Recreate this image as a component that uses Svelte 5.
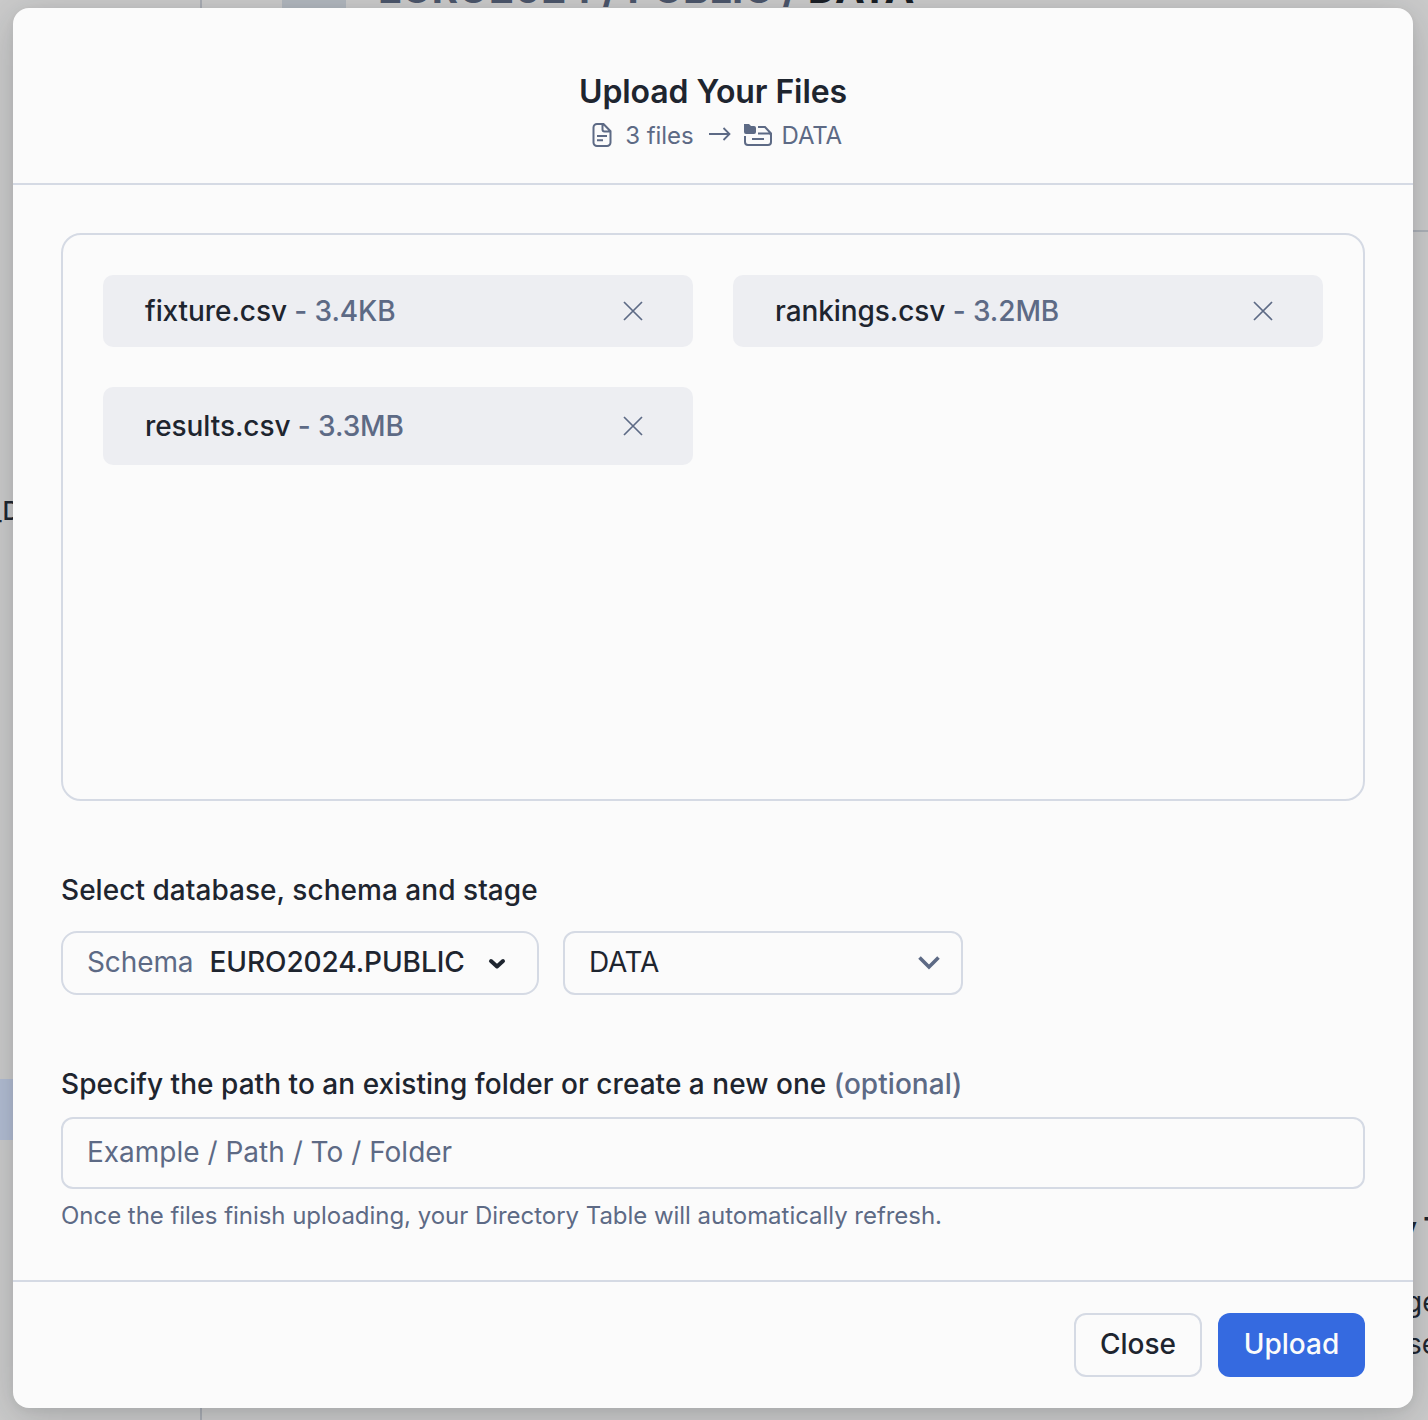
<script>
  const files = [
    { name: 'fixture.csv', size: '3.4KB' },
    { name: 'rankings.csv', size: '3.2MB' },
    { name: 'results.csv', size: '3.3MB' }
  ];
</script>

<div class="page">
  <!-- Page content that shows around the edges of the dialog -->
  <div class="backdrop" aria-hidden="true">
    <div class="rail"></div>
    <div class="tile"></div>
    <div class="crumbs"><span>EURO2024 / PUBLIC /</span> DATA</div>
    <div class="rule"></div>
    <div class="tree-item">_D</div>
    <div class="tree-active"></div>
    <div class="note heading">y T</div>
    <div class="note line-a">ge</div>
    <div class="note line-b">se</div>
  </div>

  <div class="dialog" role="dialog" aria-label="Upload Your Files">
    <header>
      <h1>Upload Your Files</h1>
      <div class="summary">
        <svg class="doc" width="20" height="26" viewBox="0 0 20 26" fill="none" stroke="currentColor" stroke-width="2">
          <path d="M11 2H5a3.500 3.500 0 0 0-3.500 3.500v15A3.500 3.500 0 0 0 5 24h10a3.500 3.500 0 0 0 3.500-3.500V9.200L11.500 2H10.500V7.500a2 2 0 0 0 2 2H18" />
          <path d="M5 14h10M5 18.200h6" />
        </svg>
        <span class="count">3 files</span>
        <svg class="arrow" width="22" height="14" viewBox="0 0 22 14" fill="none" stroke="currentColor" stroke-width="1.800">
          <path d="M0 7h20.500M14.500 1l6 6-6 6" />
        </svg>
        <svg class="folder" width="28" height="22" viewBox="0 0 28 22" fill="none" stroke="currentColor" stroke-width="2">
          <path d="M0 0h5l2 2h3a2 2 0 0 1 2 2v4a2 2 0 0 1-2 2H2a2 2 0 0 1-2-2z" fill="currentColor" stroke="none" />
          <path d="M1 12v6a3 3 0 0 0 3 3h20a3 3 0 0 0 3-3v-6.500a2 2 0 0 0-2-2H14M14 3h7l6 6.500v2" />
          <path d="M8 15h12" />
        </svg>
        <span class="target">DATA</span>
      </div>
    </header>

    <main>
      <div class="dropzone">
        {#each files as file}
          <div class="file">
            <span class="name">{file.name} <span class="muted">- {file.size}</span></span>
            <svg width="20" height="20" viewBox="0 0 20 20" fill="none" stroke="currentColor" stroke-width="1.700">
              <path d="M1 1l18 18M19 1L1 19" />
            </svg>
          </div>
        {/each}
      </div>

      <div class="label stage">Select database, schema and stage</div>
      <div class="selects">
        <div class="schema">
          <span class="key">Schema</span>
          <span class="value">EURO2024.PUBLIC</span>
          <svg width="18" height="12" viewBox="0 0 18 12" fill="none" stroke="currentColor" stroke-width="4" stroke-linecap="round" stroke-linejoin="round">
            <path d="M3 3l6 5.500L15 3" />
          </svg>
        </div>
        <div class="picker">
          <span>DATA</span>
          <svg width="22" height="14" viewBox="0 0 22 14" fill="none" stroke="currentColor" stroke-width="3.600">
            <path d="M1.500 1.500L11 11l9.500-9.500" />
          </svg>
        </div>
      </div>

      <div class="label path">Specify the path to an existing folder or create a new one <span class="muted">(optional)</span></div>
      <div class="input">Example / Path / To / Folder</div>
      <div class="help">Once the files finish uploading, your Directory Table will automatically refresh.</div>
    </main>

    <footer>
      <button class="close">Close</button>
      <button class="upload">Upload</button>
    </footer>
  </div>
</div>

<style>
  .page {
    position: relative;
    box-sizing: border-box;
    width: 1428px;
    height: 1420px;
    padding: 8px 15px 12px 13px;
    overflow: hidden;
    background: #cbcbcb;
    color: #1e252f;
    font-family: Inter, 'Liberation Sans', sans-serif;
    white-space: nowrap;
  }
  .page * { box-sizing: border-box; }

  .backdrop > div { position: absolute; }
  .rail { left: 200px; top: 0; width: 2px; height: 1420px; background: #a9adb4; }
  .tile { left: 282px; top: 0; width: 64px; height: 20px; background: #b1b7be; }
  .crumbs { left: 378px; top: -35px; font-size: 40px; line-height: 48px; font-weight: 700; letter-spacing: 0.06px; color: #191e25; }
  .crumbs span { color: #4b556a; }
  .rule { left: 1400px; top: 230px; width: 28px; height: 2px; background: #acb0b7; }
  .tree-item { left: -10px; top: 496px; font-size: 25px; line-height: 30px; font-weight: 500; }
  .tree-active { left: 0; top: 1079px; width: 20px; height: 61px; background: #b2bdd3; }
  .note { font-size: 28px; line-height: 34px; }
  .heading { left: 1400px; top: 1211px; font-weight: 700; }
  .line-a { left: 1405px; top: 1285px; }
  .line-b { left: 1407px; top: 1327px; }

  .dialog {
    position: relative;
    display: flex;
    flex-direction: column;
    width: 1400px;
    height: 1400px;
    border-radius: 16px;
    background: #fbfbfb;
    box-shadow: 0 8px 40px rgba(25, 30, 36, 0.2), 0 2px 8px rgba(25, 30, 36, 0.05);
  }

  header {
    display: flex;
    flex-direction: column;
    align-items: center;
    height: 177px;
    padding-top: 64px;
    border-bottom: 2px solid #d5dae4;
  }
  h1 { margin: 0; font-size: 32px; line-height: 40px; font-weight: 600; letter-spacing: -0.1px; }
  .summary {
    display: flex;
    align-items: center;
    height: 30px;
    margin: 8px 0 0 7px;
    color: #5d6a85;
    font-size: 24px;
    line-height: 30px;
  }
  .summary span { padding-top: 2px; }
  .count { letter-spacing: -0.05px; }
  .doc { margin: 0 13px 0 1px; }
  .arrow { margin: 0 13px 2px 15px; }
  .folder { margin: 0 10px 1px 0; }
  .target { letter-spacing: -0.2px; }

  main { flex: 1; padding: 48px 48px 0; }
  .dropzone {
    display: grid;
    grid-template-columns: 1fr 1fr;
    grid-template-rows: 72px 78px;
    gap: 40px;
    height: 568px;
    padding: 40px;
    border: 2px solid #d5dae4;
    border-radius: 20px;
  }
  .file {
    display: flex;
    align-items: center;
    justify-content: space-between;
    padding: 0 50px 0 42px;
    border-radius: 10px;
    background: #edeef2;
    font-size: 28px;
    font-weight: 500;
    letter-spacing: -0.08px;
  }
  .file svg { color: #5d6a85; }
  .muted { color: #5d6a85; }

  .label { font-size: 28px; line-height: 34px; font-weight: 500; letter-spacing: 0.04px; }
  .stage { margin-top: 72px; }
  .selects { display: flex; gap: 24px; margin-top: 24px; }
  .schema, .picker {
    display: flex;
    align-items: center;
    height: 64px;
    border: 2px solid #d5dae4;
    font-size: 28px;
  }
  .schema span, .picker span { padding-bottom: 2px; }
  .schema { width: 478px; padding-left: 24px; border-radius: 16px; }
  .key { color: #5d6a85; letter-spacing: -0.1px; }
  .value { margin-left: 16px; font-weight: 500; letter-spacing: -0.08px; }
  .schema svg { margin: 2px 0 0 23px; }
  .picker { width: 400px; justify-content: space-between; padding: 0 21px 0 24px; border-radius: 12px; letter-spacing: -0.3px; }
  .picker svg { color: #5d6a85; }
  .path { margin-top: 72px; }
  .input {
    display: flex;
    align-items: center;
    height: 72px;
    margin-top: 16px;
    padding: 0 24px 2px;
    border: 2px solid #d5dae4;
    border-radius: 12px;
    color: #5d6a85;
    font-size: 28px;
  }
  .help { margin-top: 12px; color: #5d6a85; font-size: 24px; line-height: 30px; letter-spacing: -0.035px; }

  footer {
    display: flex;
    justify-content: flex-end;
    gap: 16px;
    height: 128px;
    padding: 31px 48px 0;
    border-top: 2px solid #d5dae4;
  }
  button {
    height: 64px;
    padding: 0 0 2px;
    border-radius: 12px;
    color: inherit;
    font: 500 28px Inter, 'Liberation Sans', sans-serif;
  }
  .close { width: 128px; border: 2px solid #d5dae4; background: #fbfbfb; }
  .upload { width: 147px; border: 0; background: #356ae0; color: #fbfbfb; }
</style>
